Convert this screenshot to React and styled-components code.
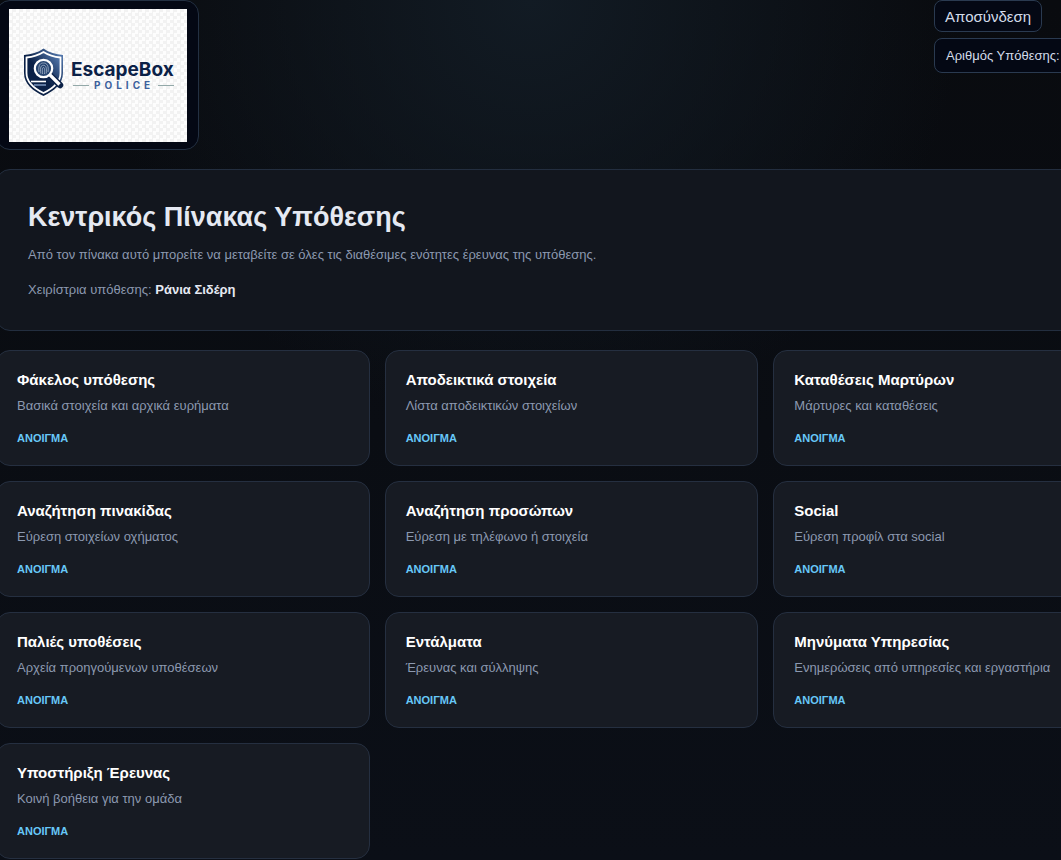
import React from 'react'
import styled, { createGlobalStyle } from 'styled-components'

const GlobalStyle = createGlobalStyle`
* {
  box-sizing: border-box;
}
body {
  margin: 0;
  min-height: 100vh;
  font-family: "Liberation Sans", Arial, sans-serif;
  color: #e5e9f2;
  background: radial-gradient(circle at 50% 0, #121b24 0, rgba(17, 26, 34, 0) 430px), linear-gradient(180deg, #090b0f 0, #0b0f17 100%);
}
`

const Page = styled.div`
overflow: hidden;
min-height: 100vh;
`
const Container = styled.main`
margin: 0 -86px 0 -4px;
display: flex;
flex-direction: column;
gap: 19px;
`
const Header = styled.header`
display: flex;
align-items: flex-start;
justify-content: space-between;
`
const LogoBox = styled.div`
padding: 8px 11px 7px 12px;
border: 1px solid #233042;
border-radius: 14px;
background-color: #040814;
`
const LogoPlate = styled.div`
width: 178px;
background: repeating-conic-gradient(#f2f2f2 0 25%, #fdfdfd 0 50%) 0 0 / 7px 7px;
svg {
  display: block;
  width: 100%;
}
`
const Actions = styled.div`
width: 213px;
display: flex;
flex-direction: column;
align-items: flex-start;
gap: 6px;
`
const LogoutButton = styled.button`
height: 32px;
padding: 0 10px;
border: 1px solid #2a3a50;
border-radius: 8px;
background-color: #040814;
color: #d3dcea;
font-family: inherit;
font-size: 15px;
cursor: pointer;
`
const CaseNumber = styled.div`
width: 100%;
padding: 0 11px;
border: 1px solid #2a3a50;
border-radius: 8px;
background-color: #040814;
color: #d3dcea;
font-size: 13px;
line-height: 33px;
`
const Hero = styled.section`
padding: 30px 31px;
border: 1px solid #232e3f;
border-radius: 14px;
background-color: #12161e;
`
const Title = styled.h1`
margin: 0 0 11px;
font-size: 27px;
line-height: 34px;
`
const Text = styled.p`
margin: 0 0 15px;
color: #8c99b0;
font-size: 13px;
line-height: 20px;
&:last-child {
  margin-bottom: 0;
}
strong {
  color: #e5e9f2;
}
`
const Grid = styled.nav`
display: grid;
grid-template-columns: repeat(3, 1fr);
gap: 15px;
`
const Card = styled.a`
display: flex;
flex-direction: column;
padding: 19px 20px;
border: 1px solid #252f40;
border-radius: 14px;
background-color: #171b23;
text-decoration: none;
`
const CardTitle = styled.span`
color: #ffffff;
font-size: 15px;
font-weight: 700;
line-height: 20px;
`
const CardText = styled.span`
margin-top: 6px;
color: #8c99b0;
font-size: 13px;
line-height: 20px;
`
const CardOpen = styled.span`
margin-top: 14px;
color: #67c8f8;
font-size: 11px;
font-weight: 700;
line-height: 16px;
`

const modules = [
  { title: 'Φάκελος υπόθεσης', text: 'Βασικά στοιχεία και αρχικά ευρήματα' },
  { title: 'Αποδεικτικά στοιχεία', text: 'Λίστα αποδεικτικών στοιχείων' },
  { title: 'Καταθέσεις Μαρτύρων', text: 'Μάρτυρες και καταθέσεις' },
  { title: 'Αναζήτηση πινακίδας', text: 'Εύρεση στοιχείων οχήματος' },
  { title: 'Αναζήτηση προσώπων', text: 'Εύρεση με τηλέφωνο ή στοιχεία' },
  { title: 'Social', text: 'Εύρεση προφίλ στα social' },
  { title: 'Παλιές υποθέσεις', text: 'Αρχεία προηγούμενων υποθέσεων' },
  { title: 'Εντάλματα', text: 'Έρευνας και σύλληψης' },
  { title: 'Μηνύματα Υπηρεσίας', text: 'Ενημερώσεις από υπηρεσίες και εργαστήρια' },
  { title: 'Υποστήριξη Έρευνας', text: 'Κοινή βοήθεια για την ομάδα' },
]

const Logo = () => (
  <svg viewBox="0 0 178 133">
    <defs>
      <linearGradient id="shield" x1="0" y1="1" x2="1" y2="0">
        <stop offset="0.45" stopColor="#0b2147" />
        <stop offset="1" stopColor="#5f86bd" />
      </linearGradient>
    </defs>
    <path d="M34.500 39.500 C40 43.500 47 45.500 54 46 V64 C54 75 45 82 34.500 87 C24 82 15 75 15 64 V46 C22 45.500 29 43.500 34.500 39.500Z" fill="url(#shield)" />
    <path d="M34.500 43 C40 46.500 46 48 51.500 48.500 V64 C51.500 73 44 79.500 34.500 84 C25 79.500 17.500 73 17.500 64 V48.500 C23 48 29 46.500 34.500 43Z" fill="url(#shield)" stroke="#ffffff" strokeWidth="1.800" />
    <path d="M22 72.500H37" stroke="#ffffff" strokeWidth="1.600" />
    <path d="M25 76H37" stroke="#8fabd2" strokeWidth="1.300" />
    <path d="M40.500 66 L51 76" stroke="#0b2147" strokeWidth="6.500" strokeLinecap="round" />
    <path d="M40.500 65.500 L50.500 75.500" stroke="#ffffff" strokeWidth="3.200" />
    <circle cx="34.500" cy="59.500" r="8.700" fill="#274570" stroke="#ffffff" strokeWidth="2.200" />
    <g fill="none" stroke="#b6c3d6" strokeWidth="0.700">
      <path d="M30 63 C29 55 32 54 34.500 54 C38 54 40 57 39 63" />
      <path d="M31.800 64.500 C31 58 32 56.300 34.500 56.300 C37 56.300 38 59 37.200 64.500" />
      <path d="M33.600 65 C33 60 33.500 58.500 34.500 58.500 C35.700 58.500 35.800 61 35.500 65" />
    </g>
    <text x="62" y="67" fill="#0b2147" fontFamily="Inter, sans-serif" fontSize="19" fontWeight="700">EscapeBox</text>
    <text x="85" y="80" fill="#3c619c" fontFamily="Inter, sans-serif" fontSize="10" fontWeight="700" letterSpacing="4">POLICE</text>
    <path d="M64 76.500H80M149 76.500H165" stroke="#93a9a9" strokeWidth="1" />
  </svg>
)

const App = () => {
  return (
    <Page>
      <GlobalStyle />
      <Container>
        <Header>
          <LogoBox>
            <LogoPlate><Logo /></LogoPlate>
          </LogoBox>
          <Actions>
            <LogoutButton type="button">Αποσύνδεση</LogoutButton>
            <CaseNumber>Αριθμός Υπόθεσης:</CaseNumber>
          </Actions>
        </Header>
        <Hero>
          <Title>Κεντρικός Πίνακας Υπόθεσης</Title>
          <Text>Από τον πίνακα αυτό μπορείτε να μεταβείτε σε όλες τις διαθέσιμες ενότητες έρευνας της υπόθεσης.</Text>
          <Text>Χειρίστρια υπόθεσης: <strong>Ράνια Σιδέρη</strong></Text>
        </Hero>
        <Grid>
          {modules.map((item) => (
            <Card href="#" key={item.title}>
              <CardTitle>{item.title}</CardTitle>
              <CardText>{item.text}</CardText>
              <CardOpen>ΑΝΟΙΓΜΑ</CardOpen>
            </Card>
          ))}
        </Grid>
      </Container>
    </Page>
  )
}

export default App
